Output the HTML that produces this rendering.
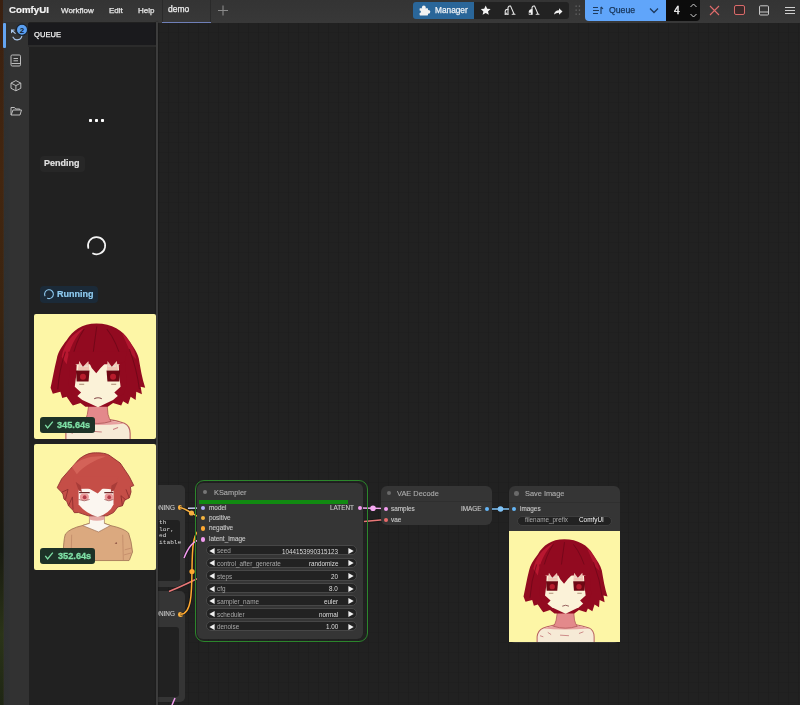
<!DOCTYPE html>
<html><head><meta charset="utf-8">
<style>
*{box-sizing:border-box;margin:0;padding:0}
html,body{width:800px;height:705px;overflow:hidden;background:#222;font-family:"Liberation Sans",sans-serif;color:#ddd}
.abs{position:absolute}
#wall{left:0;top:0;width:4.2px;height:705px;background:linear-gradient(90deg,rgba(0,0,0,0) 0,rgba(0,0,0,0) 60%,rgba(60,55,50,.45) 100%),linear-gradient(#3a2010,#43260f 25%,#3a2410 45%,#261a10 65%,#181a10 78%,#2a3418 90%,#1e2614)}
#topbar{left:3px;top:0;width:797px;height:22.8px;background:linear-gradient(#343434,#383838)}
#side{left:4.2px;top:22px;width:24.6px;height:683px;background:linear-gradient(90deg,#2e3031 0,#2f3132 5px,#323232 6.5px,#323232)}
#panel{left:28.8px;top:22px;width:127.2px;height:683px;background:#212121}
#phead{left:28px;top:22.8px;width:127.5px;height:22.3px;background:#1a1a1d}
#pborder{left:155.5px;top:22px;width:2.6px;height:683px;background:#3c3c3c;box-shadow:0 0 2px #151515}
#canvas{left:158px;top:22px;width:642px;height:683px;background-color:#212121;
 background-image:linear-gradient(90deg,rgba(0,0,0,.08) 1px,transparent 1px),linear-gradient(rgba(0,0,0,.05) 1px,transparent 1px);
 background-size:10px 10px;background-position:0 0}

.node{position:absolute;background:#353535;border-radius:6px}
.pill{position:absolute;left:206.4px;width:150.2px;height:10.6px;background:#222;border:1px solid #474747;border-radius:5px}
.wl{left:216.9px;font-size:6.35px;color:#a8a8a8}
.wv{right:462px;font-size:6.3px;color:#dedede}
.dot{position:absolute;width:4.6px;height:4.6px;border-radius:50%}
.lbl{position:absolute;will-change:transform;white-space:nowrap;line-height:1;font-size:6.4px;color:#c8c8c8;-webkit-text-stroke:0.12px currentColor}
.ttl{position:absolute;will-change:transform;white-space:nowrap;line-height:1;font-size:7.4px;color:#ababab;-webkit-text-stroke:0.12px currentColor}
.t{position:absolute;will-change:transform;white-space:nowrap;line-height:1}
</style></head><body>
<div class="abs" id="canvas"></div>
<div class="abs" style="left:158px;top:22px;width:642px;height:683px;overflow:hidden"><div class="abs" style="left:-158px;top:-22px;width:800px;height:705px"><!-- left partial nodes -->
<div class="node" style="left:150px;top:484.7px;width:34.8px;height:102.3px;border-radius:5px"></div>
<div class="abs" style="left:150px;top:519.5px;width:29.7px;height:61.5px;background:#212121;border-radius:3px"></div>
<div class="t" style="left:159px;top:519.5px;font-family:'Liberation Mono';font-size:6.2px;line-height:6.6px;color:#d8d8d8;white-space:pre">th
lor,
ed
itable</div>
<div class="lbl" style="right:625px;top:504.6px;color:#c8c8c8">ONING</div>
<div class="dot" style="left:177.6px;top:505.4px;background:#f8b040"></div>
<div class="node" style="left:150px;top:591.3px;width:34.8px;height:111px;border-radius:5px"></div>
<div class="abs" style="left:150px;top:627px;width:29px;height:70px;background:#212121;border-radius:3px"></div>
<div class="lbl" style="right:625px;top:611.4px;color:#c8c8c8">ONING</div>
<div class="dot" style="left:178.2px;top:612px;background:#f8b040"></div>

<!-- wires -->
<svg class="abs" style="left:0;top:0" width="800" height="705">
 <g fill="none" stroke-width="3" stroke="#141414" opacity="0.8">
  <path d="M169 591.5 C178 588 188 583 198 578.5"/>
  <path d="M364 521.5 L383 519.8"/>
  <path d="M180 507.8 C186 507.8 197.5 518.2 203.2 518.2"/>
  <path d="M180.5 614.3 C202.5 614.3 181.5 528.7 203.2 528.7"/>
  <path d="M188 508.2 L203.2 508"/>
  <path d="M184 558 C188 548 193 539.5 203.2 539.3"/>
  <path d="M360 508 L386 508.5"/>
  <path d="M487 509 L514 509"/>
 </g>
 <g fill="none" stroke-width="1.5">
  <path d="M169 591.5 C178 588 188 583 198 578.5" stroke="#e87878"/>
  <path d="M364 521.5 L383 519.8" stroke="#e87878"/>
  <path d="M180 507.8 C186 507.8 197.5 518.2 203.2 518.2" stroke="#f8b040"/>
  <path d="M180.5 614.3 C202.5 614.3 181.5 528.7 203.2 528.7" stroke="#ffa931"/>
  <path d="M188 508.2 L203.2 508" stroke="#c8d0f0"/>
  <path d="M184 558 C188 548 193 539.5 203.2 539.3" stroke="#f39cf0"/>
  <path d="M360 508 L386 508.5" stroke="#f4a8f0"/>
  <path d="M487 509 L514 509" stroke="#80c4f8"/>
  <path d="M172 705 L175 698" stroke="#f39cf0"/>
 </g>
 <circle cx="191.5" cy="513" r="2.6" fill="#f8b040"/>
 <circle cx="192" cy="571.5" r="2.6" fill="#ffa931"/>
 <circle cx="373" cy="508.2" r="2.8" fill="#f4a8f0"/>
 <circle cx="500.5" cy="509" r="2.8" fill="#80c4f8"/>
</svg>
<!-- KSampler -->
<div class="abs" style="left:194.5px;top:480.2px;width:173.5px;height:162px;border:1.8px solid #2c862c;border-radius:9px"></div>
<div class="node" style="left:197px;top:483px;width:166px;height:155.5px"></div>
<div class="dot" style="left:202.5px;top:489.5px;background:#777"></div>
<div class="ttl" style="left:214px;top:488.6px">KSampler</div>
<div class="abs" style="left:199px;top:500px;width:149px;height:3.6px;background:#118a11"></div>
<div class="dot" style="left:200.9px;top:505.7px;background:#b0b0f8"></div>
<div class="lbl" style="left:208.7px;top:504.6px">model</div>
<div class="dot" style="left:200.9px;top:515.9px;background:#f5b540"></div>
<div class="lbl" style="left:208.7px;top:514.8px">positive</div>
<div class="dot" style="left:200.9px;top:526.4px;background:#ffa931"></div>
<div class="lbl" style="left:208.7px;top:525.3px">negative</div>
<div class="dot" style="left:200.9px;top:537px;background:#f39cf0"></div>
<div class="lbl" style="left:208.7px;top:535.9px">latent_image</div>
<div class="lbl" style="right:445.7px;top:504.6px">LATENT</div>
<div class="dot" style="left:357.5px;top:505.5px;background:#f39cf0;width:4.5px;height:4.5px"></div>
<div class="pill" style="top:544.90px"></div><div class="t wl" style="top:548.40px">seed</div><div class="t wv" style="top:548.50px">1044153990315123</div><svg class="abs" style="left:209.3px;top:547.80px" width="6" height="6"><path d="M5.6 0.1 L0.3 3 L5.6 5.9 Z" fill="#f0f0f0"/></svg><svg class="abs" style="left:347.8px;top:547.80px" width="6" height="6"><path d="M0.4 0.1 L5.7 3 L0.4 5.9 Z" fill="#f0f0f0"/></svg><div class="pill" style="top:557.53px"></div><div class="t wl" style="top:561.03px">control_after_generate</div><div class="t wv" style="top:561.13px">randomize</div><svg class="abs" style="left:209.3px;top:560.43px" width="6" height="6"><path d="M5.6 0.1 L0.3 3 L5.6 5.9 Z" fill="#f0f0f0"/></svg><svg class="abs" style="left:347.8px;top:560.43px" width="6" height="6"><path d="M0.4 0.1 L5.7 3 L0.4 5.9 Z" fill="#f0f0f0"/></svg><div class="pill" style="top:570.16px"></div><div class="t wl" style="top:573.66px">steps</div><div class="t wv" style="top:573.76px">20</div><svg class="abs" style="left:209.3px;top:573.06px" width="6" height="6"><path d="M5.6 0.1 L0.3 3 L5.6 5.9 Z" fill="#f0f0f0"/></svg><svg class="abs" style="left:347.8px;top:573.06px" width="6" height="6"><path d="M0.4 0.1 L5.7 3 L0.4 5.9 Z" fill="#f0f0f0"/></svg><div class="pill" style="top:582.79px"></div><div class="t wl" style="top:586.29px">cfg</div><div class="t wv" style="top:586.39px">8.0</div><svg class="abs" style="left:209.3px;top:585.69px" width="6" height="6"><path d="M5.6 0.1 L0.3 3 L5.6 5.9 Z" fill="#f0f0f0"/></svg><svg class="abs" style="left:347.8px;top:585.69px" width="6" height="6"><path d="M0.4 0.1 L5.7 3 L0.4 5.9 Z" fill="#f0f0f0"/></svg><div class="pill" style="top:595.42px"></div><div class="t wl" style="top:598.92px">sampler_name</div><div class="t wv" style="top:599.02px">euler</div><svg class="abs" style="left:209.3px;top:598.32px" width="6" height="6"><path d="M5.6 0.1 L0.3 3 L5.6 5.9 Z" fill="#f0f0f0"/></svg><svg class="abs" style="left:347.8px;top:598.32px" width="6" height="6"><path d="M0.4 0.1 L5.7 3 L0.4 5.9 Z" fill="#f0f0f0"/></svg><div class="pill" style="top:608.05px"></div><div class="t wl" style="top:611.55px">scheduler</div><div class="t wv" style="top:611.65px">normal</div><svg class="abs" style="left:209.3px;top:610.95px" width="6" height="6"><path d="M5.6 0.1 L0.3 3 L5.6 5.9 Z" fill="#f0f0f0"/></svg><svg class="abs" style="left:347.8px;top:610.95px" width="6" height="6"><path d="M0.4 0.1 L5.7 3 L0.4 5.9 Z" fill="#f0f0f0"/></svg><div class="pill" style="top:620.68px"></div><div class="t wl" style="top:624.18px">denoise</div><div class="t wv" style="top:624.28px">1.00</div><svg class="abs" style="left:209.3px;top:623.58px" width="6" height="6"><path d="M5.6 0.1 L0.3 3 L5.6 5.9 Z" fill="#f0f0f0"/></svg><svg class="abs" style="left:347.8px;top:623.58px" width="6" height="6"><path d="M0.4 0.1 L5.7 3 L0.4 5.9 Z" fill="#f0f0f0"/></svg>

<!-- VAE Decode -->
<div class="node" style="left:381.3px;top:485.5px;width:111px;height:39.5px"></div>
<div class="abs" style="left:381.3px;top:501px;width:111px;height:1px;background:#2f2f2f"></div>
<div class="dot" style="left:386.5px;top:490.5px;background:#6a6a6a"></div>
<div class="ttl" style="left:396.9px;top:489.7px">VAE Decode</div>
<div class="dot" style="left:383.5px;top:506.5px;background:#f39cf0"></div>
<div class="lbl" style="left:391.4px;top:505.6px">samples</div>
<div class="dot" style="left:383.5px;top:517.5px;background:#e86a6a"></div>
<div class="lbl" style="left:391.4px;top:516.6px">vae</div>
<div class="lbl" style="right:318.7px;top:505.6px">IMAGE</div>
<div class="dot" style="left:484.5px;top:506.5px;background:#64b5f6;width:4.5px;height:4.5px"></div>

<!-- Save Image -->
<div class="node" style="left:509.3px;top:486px;width:110.5px;height:156.5px"></div>
<div class="abs" style="left:509.3px;top:502px;width:110.5px;height:1px;background:#2f2f2f"></div>
<div class="dot" style="left:514px;top:491px;background:#6a6a6a"></div>
<div class="ttl" style="left:525px;top:490px">Save Image</div>
<div class="dot" style="left:511.5px;top:506.5px;background:#64b5f6"></div>
<div class="lbl" style="left:519.5px;top:505.6px">images</div>
<div class="abs" style="left:516.5px;top:515.5px;width:95px;height:10.5px;background:#222;border:1px solid #3e3e3e;border-radius:5px"></div>
<div class="t" style="left:525px;top:517.3px;font-size:6.35px;color:#a8a8a8">filename_prefix</div>
<div class="t" style="left:579.3px;top:517.3px;font-size:6.4px;color:#f4f4f4">ComfyUI</div>
<div class="abs" style="left:508.7px;top:531px;width:111px;height:111.4px;overflow:hidden">
 <svg width="111" height="111.4" viewBox="0 0 100 100" preserveAspectRatio="xMidYMid slice">
   <rect width="100" height="100" fill="#fdf6a6"/>
   <path d="M25.4 100 L25.4 95 Q26 89 31 87 Q38 85 42 84 L59 84 Q66 85 72 87 Q76.5 89 76.6 95 L76.6 100 Z" fill="#f6ead6" stroke="#b86060" stroke-width="0.9"/>
   <path d="M31 87.5 Q40 85.5 43 84 L58 84 Q64 85.5 72 87.5 Q60 88.5 50 88.5 Q40 88.5 31 87.5 Z" fill="#e8a0a0"/>
   <path d="M44 70 L58 70 L59 80 Q60 84 61.5 85.5 Q51 89 40 85.5 Q41.5 84 42.5 80 Z" fill="#e3898b" stroke="#a85050" stroke-width="0.6"/>
   <path d="M35 91 L38 93 M46 93.5 L54 94 M63 92 L67 90.5 M28 94 L31 95" stroke="#c88080" stroke-width="0.8"/>
   <path d="M49.8 7.5 C62 7.5 71 13 75.6 21 C79 26 82.5 31 83.5 35.5 C85 44 86 51 88.6 58.7 L85 58 L86 64 L81.5 62 L81 68.5 L77 66 L75 72 L71 69.5 L69.5 73 L63 71 L58.8 74 L41 74 L37 71 L31 73 L29.7 71.4 L26 66 L22.5 67 L21 62 L15 63.5 L13.2 58.7 C15 51 16 44 18.2 35.5 C19 31 22 26 26 21 C31 13 38 7.5 49.8 7.5 Z" fill="#920a20"/>
   <path d="M22 34 C24 24 30 16 40 11 C33 18 28 27 26 40 Z" fill="#be1a34" opacity="0.85"/>
   <path d="M70 15 C77 21 80 28 81.5 36 L77.5 32 Z" fill="#be1a34" opacity="0.7"/>
   <path d="M40 12 Q33 22 30 38 M58 12 Q66 22 70 38 M50 10 Q48 24 46 40 M25 30 Q20 45 19 60 M76 28 Q82 44 84 60" stroke="#6a0616" stroke-width="0.8" fill="none" opacity="0.8"/>
   <path d="M31 40 L31 62.5 L38.5 68.5 L51 74.3 L63 68.5 L70 62.5 L70 40 Z" fill="#fbf2d8"/>
   <path d="M36 37.4 L43.4 37.4 L44 44.6 L35 44.6 Z M58.6 37.4 L66 37.4 L67 44.6 L58 44.6 Z" fill="#f0c4b4"/>
   <path d="M36.5 41.5 h6.5 M58.8 41.5 h6.5" stroke="#e8e0d0" stroke-width="1"/>
   <path d="M27 30 L74 30 L72 40 L66 37.4 L62 42 L58.6 37.4 L53 43 L49.6 47.3 L46 43 L43.4 37.4 L39 42 L36 37.4 L30 41 Z" fill="#920a20"/>
   <path d="M29 38 L34 40.5 L33.5 50 L32.5 58 L37.5 62.5 L34 66 L30 64 L27.5 56 Z" fill="#920a20"/>
   <path d="M72.5 38 L67.5 40.5 L68 50 L69 58 L64 62.5 L67.5 66 L71.5 64 L74 56 Z" fill="#920a20"/>
   <path d="M33.4 45 L44.2 45 L43.5 53.7 L34 53.7 Z" fill="#6e0814"/>
   <ellipse cx="39" cy="50" rx="2.4" ry="2.4" fill="#b81c2c"/>
   <path d="M57.8 45 L68.6 45 L68 53.7 L58.5 53.7 Z" fill="#6e0814"/>
   <ellipse cx="63" cy="50" rx="2.4" ry="2.4" fill="#b81c2c"/>
   <path d="M36 55.9 h4 M61.5 55.9 h4" stroke="#a88870" stroke-width="0.8"/>
   <path d="M48 67.5 Q51 65.8 54 67.5" stroke="#8a5050" stroke-width="0.8" fill="none"/>
  </svg>
</div>
</div></div>

<div class="abs" id="wall"></div>
<div class="abs" id="topbar"></div>
<div class="abs" id="side"></div>
<div class="abs" id="panel"></div>
<div class="abs" id="phead"></div>
<div class="abs" id="pborder"></div>

<!-- top bar text -->
<div class="t" style="left:8.6px;top:5.2px;font-size:9.7px;font-weight:bold;color:#f4f4f4;-webkit-text-stroke:0.2px currentColor">ComfyUI</div>
<div class="t" style="-webkit-text-stroke:0.25px currentColor;left:60.7px;top:6.8px;font-size:8px;color:#e8e8e8">Workflow</div>
<div class="t" style="-webkit-text-stroke:0.25px currentColor;left:108.7px;top:6.8px;font-size:8px;color:#e8e8e8">Edit</div>
<div class="t" style="-webkit-text-stroke:0.25px currentColor;left:137.8px;top:6.8px;font-size:8px;color:#e8e8e8">Help</div>
<div class="abs" style="left:162px;top:0;width:49px;height:22px;border-left:1px solid #2a2a2a;border-right:1px solid #2a2a2a"></div>
<div class="abs" style="left:162px;top:22px;width:49px;height:1px;background:#6f7fb8;z-index:5"></div>
<div class="t" style="-webkit-text-stroke:0.25px currentColor;left:167.7px;top:5px;font-size:8.5px;color:#f0f0f0">demo</div>
<svg class="abs" style="left:217px;top:4px" width="12" height="13"><path d="M1 6.5 H11 M6 1.5 V11.5" stroke="#8a8a8a" stroke-width="1.1"/></svg>


<!-- sidebar -->
<div class="abs" style="left:3px;top:22.5px;width:3px;height:25.5px;background:#64a4f0;border-radius:1px"></div>
<svg class="abs" style="left:3px;top:22px" width="25" height="110" viewBox="0 0 25 110">
 <g fill="none" stroke="#a9c4e6" stroke-width="1.2" stroke-linecap="round">
  <path d="M10 15.2 A4.7 4.7 0 0 0 18.9 13.2"/>
  <path d="M8.6 8 l3.6 3.4 M8.6 10.6 v-2.6 h2.6"/>
 </g>
 <circle cx="19" cy="7.8" r="5.6" fill="#5b9ff0" stroke="#18222e" stroke-width="1.2"/>
 <text x="19" y="10.8" font-family="Liberation Sans" font-weight="bold" font-size="8" fill="#0e1a2a" text-anchor="middle">2</text>
 <g fill="none" stroke="#bdbdbd" stroke-width="1">
  <rect x="8" y="33" width="9.5" height="11" rx="1.2"/>
  <path d="M10.5 36.5h4.5 M10.5 38.8h4.5 M8.5 41.5h9"/>
  <path d="M12.9 58.6 l4.9 2.5 v5.2 l-4.9 2.5 l-4.9 -2.5 v-5.2 z M8 61.1 l4.9 2.5 l4.9 -2.5 M12.9 63.6 v5.2"/>
  <path d="M8 85.5 v7.5 h9 l1.5 -5 h-8.5 l-1.8 5 M8 85.5 h3.5 l1.2 1.5 h4 v1"/>
 </g>
</svg>
<div class="t" style="-webkit-text-stroke:0.25px currentColor;left:33.5px;top:30.5px;font-size:7.5px;color:#f2f2f2;font-weight:normal;letter-spacing:0.1px">QUEUE</div>
<div class="abs" style="left:28px;top:45.1px;width:127.5px;height:1.6px;background:#2b2b2b"></div>

<!-- queue content -->
<div class="abs" style="left:89.3px;top:119.1px;width:2.6px;height:2.6px;background:#fff;border-radius:30%"></div>
<div class="abs" style="left:95.3px;top:119.1px;width:2.6px;height:2.6px;background:#fff;border-radius:30%"></div>
<div class="abs" style="left:101.3px;top:119.1px;width:2.6px;height:2.6px;background:#fff;border-radius:30%"></div>
<div class="abs" style="left:39.5px;top:155.5px;width:45.5px;height:16px;background:#272727;border-radius:4px"></div>
<div class="t" style="left:44.3px;top:159px;font-size:9px;font-weight:bold;color:#e0e0e0;-webkit-text-stroke:0.2px currentColor">Pending</div>
<svg class="abs" style="left:84px;top:233px" width="25" height="25" viewBox="0 0 25 25">
 <path d="M9 20.5 A8.6 8.6 0 1 0 4.3 15" fill="none" stroke="#f4f4f4" stroke-width="1.7" stroke-linecap="round"/>
</svg>
<div class="abs" style="left:40px;top:286px;width:58px;height:17px;background:#1b2a38;border-radius:4px"></div>
<svg class="abs" style="left:42px;top:287px" width="14" height="14" viewBox="0 0 14 14">
 <path d="M5.5 11.3 A4.4 4.4 0 1 0 2.9 8.8" fill="none" stroke="#8cc6ec" stroke-width="1.1" stroke-linecap="round"/>
</svg>
<div class="t" style="left:57.3px;top:290px;font-size:9px;font-weight:bold;color:#8ecbf0;-webkit-text-stroke:0.2px currentColor">Running</div>


<div class="abs" style="left:33.5px;top:313.5px;width:122px;height:125.5px;border-radius:2px;overflow:hidden">
 <svg width="122" height="125.5" viewBox="0 0 100 100" preserveAspectRatio="xMinYMid slice">
   <rect width="100" height="100" fill="#fdf6a6"/>
   <path d="M25.4 100 L25.4 95 Q26 89 31 87 Q38 85 42 84 L59 84 Q66 85 72 87 Q76.5 89 76.6 95 L76.6 100 Z" fill="#f6ead6" stroke="#b86060" stroke-width="0.9"/>
   <path d="M31 87.5 Q40 85.5 43 84 L58 84 Q64 85.5 72 87.5 Q60 88.5 50 88.5 Q40 88.5 31 87.5 Z" fill="#e8a0a0"/>
   <path d="M44 70 L58 70 L59 80 Q60 84 61.5 85.5 Q51 89 40 85.5 Q41.5 84 42.5 80 Z" fill="#e3898b" stroke="#a85050" stroke-width="0.6"/>
   <path d="M35 91 L38 93 M46 93.5 L54 94 M63 92 L67 90.5 M28 94 L31 95" stroke="#c88080" stroke-width="0.8"/>
   <path d="M49.8 7.5 C62 7.5 71 13 75.6 21 C79 26 82.5 31 83.5 35.5 C85 44 86 51 88.6 58.7 L85 58 L86 64 L81.5 62 L81 68.5 L77 66 L75 72 L71 69.5 L69.5 73 L63 71 L58.8 74 L41 74 L37 71 L31 73 L29.7 71.4 L26 66 L22.5 67 L21 62 L15 63.5 L13.2 58.7 C15 51 16 44 18.2 35.5 C19 31 22 26 26 21 C31 13 38 7.5 49.8 7.5 Z" fill="#920a20"/>
   <path d="M22 34 C24 24 30 16 40 11 C33 18 28 27 26 40 Z" fill="#be1a34" opacity="0.85"/>
   <path d="M70 15 C77 21 80 28 81.5 36 L77.5 32 Z" fill="#be1a34" opacity="0.7"/>
   <path d="M40 12 Q33 22 30 38 M58 12 Q66 22 70 38 M50 10 Q48 24 46 40 M25 30 Q20 45 19 60 M76 28 Q82 44 84 60" stroke="#6a0616" stroke-width="0.8" fill="none" opacity="0.8"/>
   <path d="M31 40 L31 62.5 L38.5 68.5 L51 74.3 L63 68.5 L70 62.5 L70 40 Z" fill="#fbf2d8"/>
   <path d="M36 37.4 L43.4 37.4 L44 44.6 L35 44.6 Z M58.6 37.4 L66 37.4 L67 44.6 L58 44.6 Z" fill="#f0c4b4"/>
   <path d="M36.5 41.5 h6.5 M58.8 41.5 h6.5" stroke="#e8e0d0" stroke-width="1"/>
   <path d="M27 30 L74 30 L72 40 L66 37.4 L62 42 L58.6 37.4 L53 43 L49.6 47.3 L46 43 L43.4 37.4 L39 42 L36 37.4 L30 41 Z" fill="#920a20"/>
   <path d="M29 38 L34 40.5 L33.5 50 L32.5 58 L37.5 62.5 L34 66 L30 64 L27.5 56 Z" fill="#920a20"/>
   <path d="M72.5 38 L67.5 40.5 L68 50 L69 58 L64 62.5 L67.5 66 L71.5 64 L74 56 Z" fill="#920a20"/>
   <path d="M33.4 45 L44.2 45 L43.5 53.7 L34 53.7 Z" fill="#6e0814"/>
   <ellipse cx="39" cy="50" rx="2.4" ry="2.4" fill="#b81c2c"/>
   <path d="M57.8 45 L68.6 45 L68 53.7 L58.5 53.7 Z" fill="#6e0814"/>
   <ellipse cx="63" cy="50" rx="2.4" ry="2.4" fill="#b81c2c"/>
   <path d="M36 55.9 h4 M61.5 55.9 h4" stroke="#a88870" stroke-width="0.8"/>
   <path d="M48 67.5 Q51 65.8 54 67.5" stroke="#8a5050" stroke-width="0.8" fill="none"/>
  </svg>
</div>
<div class="abs" style="left:33.5px;top:444px;width:122px;height:126px;border-radius:2px;overflow:hidden">
 <svg width="122" height="126" viewBox="0 0 100 100" preserveAspectRatio="xMinYMid slice">
   <rect width="100" height="100" fill="#fdf6a6"/>
   <path d="M23.4 92.5 L23.4 81.7 Q23.9 74 25 71.4 Q28.4 67 38.5 64.7 L44 63 L55.9 63 L60.7 64.7 Q71.4 67 75 70.6 Q77.4 77 78.2 85.7 L75.8 92 L75.4 92.5 Z" fill="#dba97f" stroke="#9a6a50" stroke-width="0.6"/>
   <path d="M29.9 72 L29.4 92 M70.4 72 L70.9 92" stroke="#b88060" stroke-width="0.5"/>
   <path d="M72 84 L77.5 82.5 M71.5 88 L77 86.5" stroke="#c08868" stroke-width="0.6"/>
   <path d="M44 56 L55.9 56 L55.9 63 L60.7 64.7 L51.2 69.8 L38.5 64.7 L44 63 Z" fill="#fbf6f0" stroke="#9a6a50" stroke-width="0.5"/>
   <path d="M44 57 L55.9 57 L55.9 60 Q49.9 62 44 60 Z" fill="#e6aaa6"/>
   <path d="M48.8 7 C54 7 57 7.5 59.5 8.8 L68.4 15.1 L75.6 25.8 L79.2 33 L76.5 34 L77 38 L75.6 42.8 L72 44.5 L70.2 49 L66.5 50 L63.1 54.4 L58 57 L43 57 L35.4 54.4 L32 54.5 L30.9 52.6 L27.4 49 L26 45.5 L23.8 43.7 L23 40 L22 38.3 L18.4 34.7 L22 27.6 L28.3 20.4 L35.4 12.4 C40 8.5 44 7 48.8 7 Z" fill="#c54e47" stroke="#8e3030" stroke-width="0.7"/>
   <path d="M22 38.3 L27 36 L25 44 M27.4 49 L30.5 42 L31 52 M70.2 49 L69 41 L73 44.5 M75.6 42.8 L73 36" stroke="#8e2e2e" stroke-width="0.7" fill="none"/>
   <path d="M30 18 C37 11 47 9 57 10 C48 13 40 17 34 24 Z" fill="#d86a5e" opacity="0.75"/>
   <path d="M35.4 35.6 L63.1 35.6 L63.1 48 Q60 55 50.6 58 Q41 55 35.4 48 Z" fill="#fbf6f0"/>
   <path d="M31 26 L67 26 L63.1 36.5 L55 34.7 L50.6 39.2 L42.6 34.7 L35.4 35.6 L33 42 Z" fill="#c54e47"/>
   <path d="M33 30 L37 33 L38 38 L35.4 37 Z M66.5 30 L61.5 33 L61 38 L63.5 37 Z" fill="#a83c38"/>
   <path d="M35.8 38.6 L44.2 38.6 M55.8 38.6 L63 38.6" stroke="#6e2a2a" stroke-width="1"/>
   <ellipse cx="40" cy="42" rx="3.6" ry="2.9" fill="#ec9c9c"/>
   <ellipse cx="40.2" cy="42.2" rx="1.5" ry="1.6" fill="#b23c48"/>
   <ellipse cx="59.5" cy="42" rx="3.4" ry="2.9" fill="#ec9c9c"/>
   <ellipse cx="59.7" cy="42.2" rx="1.5" ry="1.6" fill="#b23c48"/>
   <path d="M35.4 44 Q40 46.2 44.2 44 M55.8 44 Q59.5 46.2 63 44" stroke="#8a4040" stroke-width="0.5" fill="none"/>
   <path d="M64 79 L65.5 77.8 L66 79.4 Z" fill="#8a5040"/>
  </svg>
</div>
<div class="abs" style="left:39.7px;top:417.2px;width:55px;height:15.5px;background:#1d3227;border-radius:3px"></div>
<svg class="abs" style="left:39.7px;top:417.2px" width="16" height="16" viewBox="0 0 16 16"><path d="M5.3 7.9 L7.6 10.9 L12.8 4.6" fill="none" stroke="#7fe0a6" stroke-width="1.3"/></svg>
<div class="t" style="left:57.3px;top:421px;font-size:9.2px;font-weight:bold;color:#7fe0a6;-webkit-text-stroke:0.3px currentColor">345.64s</div>
<div class="abs" style="left:39.9px;top:548.2px;width:55px;height:15.7px;background:#1d3227;border-radius:3px"></div>
<svg class="abs" style="left:39.9px;top:548.2px" width="16" height="16" viewBox="0 0 16 16"><path d="M5.3 7.9 L7.6 10.9 L12.8 4.6" fill="none" stroke="#7fe0a6" stroke-width="1.3"/></svg>
<div class="t" style="left:57.5px;top:552px;font-size:9.2px;font-weight:bold;color:#7fe0a6;-webkit-text-stroke:0.3px currentColor">352.64s</div>


<!-- toolbar right -->
<div class="abs" style="left:413px;top:2px;width:61px;height:17px;background:#2a6699;border-radius:3px 0 0 3px"></div>
<svg class="abs" style="left:418px;top:4px" width="14" height="13" viewBox="0 0 14 13">
 <g fill="#f2f2f2"><rect x="1.6" y="4.2" width="8.4" height="7.2" rx="0.6"/><circle cx="5.8" cy="3.4" r="1.9"/><circle cx="10.4" cy="7.8" r="1.9"/></g>
 <circle cx="1.6" cy="7.8" r="1.3" fill="#2a6699"/>
</svg>
<div class="t" style="-webkit-text-stroke:0.25px currentColor;left:434.6px;top:6.3px;font-size:8.3px;color:#eef2f6">Manager</div>
<div class="abs" style="left:474px;top:2px;width:95px;height:17px;background:#222;border-radius:0 3px 3px 0"></div>
<svg class="abs" style="left:474px;top:2px" width="95" height="17" viewBox="0 0 95 17">
 <path d="M11.7 3.6 l1.5 3.2 3.4 0.3 -2.6 2.3 0.8 3.4 -3.1 -1.8 -3.1 1.8 0.8 -3.4 -2.6 -2.3 3.4 -0.3 z" fill="#f4f4f4"/>
 <g fill="none" stroke="#ececec" stroke-width="1.05" stroke-linecap="round">
  <path d="M34 12.2 V5.6 Q34.6 3.5 36.6 4.1 L40.1 12.2 M38.2 12.2 H41"/>
  <path d="M31.2 12.3 V9.2 Q31.4 7.2 34 7.2"/>
  <path d="M31.2 12.3 H34"/>
  <path d="M58 12.2 V5.6 Q58.6 3.5 60.6 4.1 L64.1 12.2 M62.2 12.2 H65"/>
 </g>
 <circle cx="32.1" cy="11.2" r="0.75" fill="#ececec"/>
 <path d="M54.8 12.8 V9.4 Q55 6.9 58.4 6.9 V12.8 Z" fill="#f2f2f2"/>
 <circle cx="56" cy="11.4" r="0.8" fill="#222"/>
 <path d="M80 12.5 q0.5 -4 5 -4.2 v-2 l3.5 3.2 -3.5 3.2 v-2 q-3 0 -5 1.8 z" fill="#f0f0f0"/>
</svg>
<svg class="abs" style="left:575px;top:5px" width="6" height="11" viewBox="0 0 6 11">
 <g fill="#666"><rect x="0.5" y="0.5" width="1.3" height="1.3"/><rect x="3.8" y="0.5" width="1.3" height="1.3"/><rect x="0.5" y="4.5" width="1.3" height="1.3"/><rect x="3.8" y="4.5" width="1.3" height="1.3"/><rect x="0.5" y="8.5" width="1.3" height="1.3"/><rect x="3.8" y="8.5" width="1.3" height="1.3"/></g>
</svg>
<div class="abs" style="left:585.3px;top:0;width:81px;height:21px;background:#60a5fa;border-radius:0 0 0 4px"></div>
<svg class="abs" style="left:592px;top:5px" width="12" height="11" viewBox="0 0 12 11">
 <g fill="none" stroke="#1e3a5c" stroke-width="1.1"><path d="M1 2.5h5 M1 5.5h6 M1 8.5h5 M9 2 v7 M9 2 l2 1.8"/></g>
</svg>
<div class="t" style="-webkit-text-stroke:0.25px currentColor;left:608.5px;top:5.8px;font-size:8.7px;color:#173457">Queue</div>
<svg class="abs" style="left:648px;top:6px" width="12" height="9" viewBox="0 0 12 9"><path d="M2 2.5 L6 6.5 L10 2.5" fill="none" stroke="#1e3a5c" stroke-width="1.3"/></svg>
<div class="abs" style="left:666.2px;top:0;width:34px;height:20.5px;background:#0c0c0c;border-radius:0 0 4px 0"></div>
<div class="t" style="left:674.2px;top:5.6px;font-size:10.3px;color:#fafafa;-webkit-text-stroke:0.35px currentColor">4</div>
<svg class="abs" style="left:689px;top:1px" width="9" height="19" viewBox="0 0 9 19"><g fill="none" stroke="#cfcfcf" stroke-width="1"><path d="M1.5 6 L4.5 3 L7.5 6 M1.5 13 L4.5 16 L7.5 13"/></g></svg>
<svg class="abs" style="left:708px;top:4px" width="13" height="13" viewBox="0 0 13 13"><path d="M2 2 L11 11 M11 2 L2 11" stroke="#e06c6c" stroke-width="1.1"/></svg>
<div class="abs" style="left:734px;top:5.2px;width:10.8px;height:10px;border:1.3px solid #d86a6a;border-radius:2px;background:#3a2a2a"></div>
<svg class="abs" style="left:758px;top:5px" width="12" height="11" viewBox="0 0 12 11"><g fill="none" stroke="#c8c8c8" stroke-width="1"><rect x="1.5" y="0.8" width="9" height="9.2" rx="1"/><path d="M1.5 7 h9"/></g></svg>
<svg class="abs" style="left:784px;top:5px" width="12" height="11" viewBox="0 0 12 11"><g stroke="#d0d0d0" stroke-width="1"><path d="M1 2.5h10 M1 5.5h10 M1 8.5h10"/></g></svg>
</body></html>
